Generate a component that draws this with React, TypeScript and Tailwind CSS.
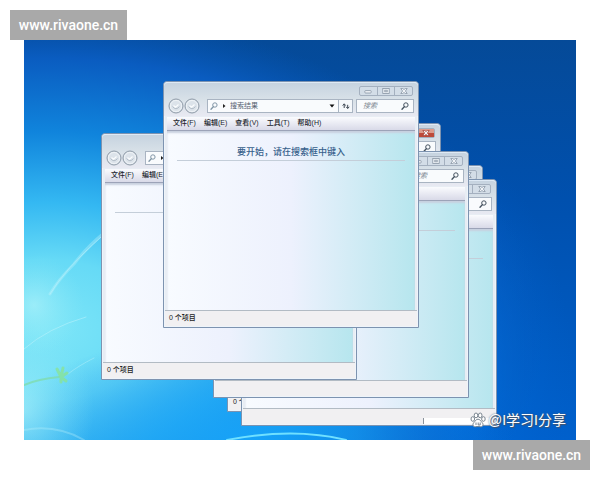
type WindowProps = {
  className: string;
  menus?: string[];
  heading?: string;
  status?: string;
  activeClose?: boolean;
  patched?: boolean;
};

const menuItems = ["文件(F)", "编辑(E)", "查看(V)", "工具(T)", "帮助(H)"];

const Badge = ({ className }: { className: string }) => {
  return (
    <a
      href="#"
      className={`flex h-[30px] w-[117px] items-center justify-center bg-[#a9a9a9] font-['Roboto',sans-serif] text-sm font-medium text-white ${className}`}
    >
      www.rivaone.cn
    </a>
  );
};

const SearchIcon = ({ className }: { className: string }) => {
  return (
    <svg viewBox="0 0 8 8" className={`h-2 w-2 shrink-0 ${className}`} fill="none" stroke="currentColor">
      <circle cx="4.9" cy="3" r="2.2" strokeWidth="1" />
      <path d="M3.3 4.7 L1 7.2" strokeWidth="1.3" strokeLinecap="round" />
    </svg>
  );
};

const NavButton = ({ label }: { label: string }) => {
  return (
    <button aria-label={label} className="h-4 w-4 shrink-0">
      <svg viewBox="0 0 16 16" className="h-4 w-4" fill="none">
        <circle cx="8" cy="8" r="7" fill="#dce3ea" stroke="#8f9ba8" strokeWidth="1" />
        <circle cx="8" cy="8" r="5.6" stroke="#f3f6f9" strokeWidth="0.8" />
        <path d="M4.5 8.5 Q8 13 11.5 8.5" stroke="#b3bdc8" strokeWidth="1" />
        <path d="M5.5 7.5 L7.5 9.2 L10.5 6.5" stroke="#fafcfd" strokeWidth="1.2" />
      </svg>
    </button>
  );
};

const Captions = ({ activeClose }: { activeClose?: boolean }) => {
  return (
    <div className="flex h-2.5 w-[54px] rounded-xs border border-[#a4b0bf] bg-[#d3dde7] text-[#8794a3]">
      <button aria-label="最小化" className="flex flex-1 items-center justify-center border-r border-[#a4b0bf]">
        <svg viewBox="0 0 8 6" className="h-1.5 w-2" fill="#f1f4f8" stroke="currentColor" strokeWidth="0.8">
          <rect x="0.8" y="2.6" width="6.4" height="2.4" rx="0.8" />
        </svg>
      </button>
      <button aria-label="最大化" className="flex flex-1 items-center justify-center border-r border-[#a4b0bf]">
        <svg viewBox="0 0 8 6" className="h-1.5 w-2" fill="#f1f4f8" stroke="currentColor" strokeWidth="0.8">
          <rect x="0.8" y="0.5" width="6.4" height="5" />
          <rect x="2.8" y="2.2" width="2.4" height="1.6" />
        </svg>
      </button>
      <button
        aria-label="关闭"
        className={`flex flex-1 items-center justify-center ${activeClose ? "bg-linear-to-b from-[#dc9c8e] from-45% to-[#bd4a3a] to-50% text-[#a8483c]" : ""}`}
      >
        <svg viewBox="0 0 8 6" className="h-1.5 w-2" fill="#f1f4f8" stroke="currentColor" strokeWidth="0.8">
          <path d="M0.8 0.5 H2.8 L4 1.6 L5.2 0.5 H7.2 L5.4 3 L7.2 5.5 H5.2 L4 4.4 L2.8 5.5 H0.8 L2.6 3 Z" />
        </svg>
      </button>
    </div>
  );
};

const SearchWindow = ({ className, menus = [], heading, status, activeClose, patched }: WindowProps) => {
  return (
    <section
      aria-label="搜索结果"
      className={`absolute flex h-[247px] w-[256px] flex-col rounded-t border border-[#7d93b0] bg-[#e8edf4] shadow-[inset_0_0_0_1px_#eef4fa] ${className}`}
    >
      {/* TITLE BAR */}
      <div className="flex flex-col rounded-t border-t border-[#dfeaf5] bg-linear-to-b from-[#c6d3e0] via-[#d8e1e8] to-[#e8e9f2]">
        <div className="flex justify-end px-[5px] pt-[3px]">
          <Captions activeClose={activeClose} />
        </div>
        {/* ADDRESS */}
        <div className="flex h-5 items-center px-1">
          <NavButton label="后退" />
          <NavButton label="前进" />
          <div className="ml-[7px] flex h-3.5 flex-1 items-center border border-[#a9b4c2] bg-[#f9fbfd] pl-0.5">
            <SearchIcon className="text-[#8196a6]" />
            <svg viewBox="0 0 4 6" className="mx-1 h-1.5 w-1" fill="#222">
              <path d="M1 1 L3.5 3 L1 5 Z" />
            </svg>
            <input
              aria-label="地址"
              defaultValue="搜索结果"
              className="w-0 min-w-0 flex-1 bg-transparent text-[7px] text-[#566270] outline-none"
            />
            <button aria-label="展开" className="flex w-3 justify-center">
              <svg viewBox="0 0 6 4" className="h-1 w-1.5" fill="#111">
                <path d="M0.5 0.5 H5.5 L3 3.5 Z" />
              </svg>
            </button>
          </div>
          <button
            aria-label="刷新"
            className="flex h-3.5 w-3.5 items-center justify-center border border-l-0 border-[#a9b4c2] bg-[#f5f8fb]"
          >
            <svg viewBox="0 0 8 8" className="h-2 w-2" fill="none" stroke="#3c4652" strokeWidth="1">
              <path d="M2.2 6 V2.2 M0.7 3.6 L2.2 1.8 L3.7 3.6" />
              <path d="M5.7 2.8 V6 M4.2 4.8 L5.7 6.6 L7.2 4.8" />
            </svg>
          </button>
          <div className="ml-[3px] flex h-3.5 w-[58px] items-center border border-[#a9b4c2] bg-[#f9fbfd] pr-1 pl-1.5">
            <input
              aria-label="搜索"
              placeholder="搜索"
              className="w-0 min-w-0 flex-1 bg-transparent text-[7px] italic outline-none placeholder:text-[#7d8791]"
            />
            <SearchIcon className="text-[#45525f]" />
          </div>
        </div>
      </div>
      {/* MENU */}
      <nav className="mx-[3px] mt-px flex h-3.5 items-center gap-2 overflow-hidden border-b border-[#9ca3b8] bg-linear-to-b from-[#fafbfe] to-[#d9dae8] pb-0.5 pl-1.5 text-[7px] leading-none font-medium whitespace-nowrap text-[#20242c]">
        {menus.map((menu) => (
          <button key={menu}>{menu}</button>
        ))}
      </nav>
      {/* CONTENT */}
      <main className="mx-[3px] flex-1 bg-linear-to-r from-[#f8fbff] via-[#edf1fd] via-50% to-[#b6e6ee] shadow-[inset_0_2px_2px_#c8d0df]">
        <div className="mx-2.5 h-[30px] border-b border-[#c4ced9] pt-[13px]">
          {heading && (
            <h1 className="text-center text-[9px] leading-4 font-medium text-[#365f8c]">{heading}</h1>
          )}
        </div>
      </main>
      {/* STATUS */}
      <footer className="mx-px mb-px flex h-4 items-center border-t border-[#b2bbc4] bg-[#f1f0f2] pl-1 text-[7px] font-medium text-[#222]">
        {status}
        {patched && <span className="ml-auto h-1.5 w-[72px] self-end border-l border-[#8a929c] bg-white" />}
      </footer>
    </section>
  );
};

const Wallpaper = () => {
  return (
    <svg viewBox="0 0 552 400" preserveAspectRatio="none" className="absolute inset-0 h-full w-full">
      <defs>
        <linearGradient id="sky" x1="0" y1="0" x2="0" y2="1">
          <stop offset="0" stopColor="#054a98" />
          <stop offset="0.4" stopColor="#0050ae" />
          <stop offset="1" stopColor="#0060cc" />
        </linearGradient>
        <radialGradient id="glow" gradientUnits="userSpaceOnUse" cx="0" cy="0" r="1" gradientTransform="translate(20 290) scale(500 320)">
          <stop offset="0" stopColor="#7ee6f8" />
          <stop offset="0.22" stopColor="#66daf6" />
          <stop offset="0.4" stopColor="#34b8f2" />
          <stop offset="0.62" stopColor="#1084dc" />
          <stop offset="0.85" stopColor="#0a5cc0" />
          <stop offset="1" stopColor="#0656b4" stopOpacity="0" />
        </radialGradient>
        <radialGradient id="floor" gradientUnits="userSpaceOnUse" cx="0" cy="0" r="1" gradientTransform="translate(230 400) scale(260 110)">
          <stop offset="0" stopColor="#16a4fa" stopOpacity="0.9" />
          <stop offset="0.4" stopColor="#149cf6" stopOpacity="0.6" />
          <stop offset="1" stopColor="#0a80ea" stopOpacity="0" />
        </radialGradient>
        <radialGradient id="right" gradientUnits="userSpaceOnUse" cx="0" cy="0" r="1" gradientTransform="translate(440 350) scale(110 230)">
          <stop offset="0" stopColor="#0070e0" stopOpacity="0.8" />
          <stop offset="1" stopColor="#0060cc" stopOpacity="0" />
        </radialGradient>
        <radialGradient id="haze">
          <stop offset="0" stopColor="#b4f4fa" stopOpacity="0.6" />
          <stop offset="1" stopColor="#8be8f6" stopOpacity="0" />
        </radialGradient>
      </defs>
      <rect width="552" height="400" fill="url(#sky)" />
      <rect width="552" height="400" fill="url(#glow)" />
      <rect width="552" height="400" fill="url(#right)" />
      <rect width="552" height="400" fill="url(#floor)" />
      <ellipse cx="10" cy="265" rx="50" ry="50" fill="url(#haze)" />
      <ellipse cx="0" cy="370" rx="70" ry="90" fill="url(#haze)" />
      {/* light streaks */}
      <g fill="none" stroke="#c2f4fb" strokeLinecap="round">
        <path d="M26 254 Q34 240 50 224 Q62 208 80 193" strokeWidth="3" opacity="0.35" />
        <path d="M26 254 Q40 230 78 196" strokeWidth="1" opacity="0.5" />
        <path d="M0 309 Q24 288 62 277" strokeWidth="1" opacity="0.5" />
        <path d="M44 334 Q54 326 70 318" strokeWidth="1" opacity="0.4" />
        <path d="M0 390 Q32 384 60 400" strokeWidth="2" opacity="0.3" />
        <path d="M203 400 Q270 387 322 400" stroke="#6fe0ff" strokeWidth="2" />
      </g>
      {/* sprout */}
      <g fill="none" stroke="#7fdcae" strokeLinecap="round">
        <path d="M0 345 Q14 339 35 337" strokeWidth="2" opacity="0.8" />
        <path d="M37 337 L33 329 M37 337 L39 328 M37 337 L43 333 M37 337 L42 341 M37 337 L37 342" strokeWidth="3" stroke="#8ce48a" opacity="0.7" />
      </g>
    </svg>
  );
};

const App = () => {
  return (
    <div className="flex flex-col bg-white pt-2.5 font-['Liberation_Sans','Noto_Sans_CJK_SC',sans-serif]">
      <Badge className="ml-2.5 self-start" />
      {/* DESKTOP */}
      <div className="relative mx-6 aspect-[552/400] overflow-hidden">
        <Wallpaper />
        <SearchWindow className="top-[83px] left-[161px]" activeClose />
        <SearchWindow className="top-[125px] left-[203px]" status="0 个项目" />
        <SearchWindow className="top-[139px] left-[217px]" patched />
        <SearchWindow className="top-[111px] left-[189px]" />
        <SearchWindow className="top-[93px] left-[77px]" menus={menuItems.slice(0, 2)} status="0 个项目" />
        <SearchWindow
          className="top-[41px] left-[139px]"
          menus={menuItems}
          heading="要开始，请在搜索框中键入"
          status="0 个项目"
        />
        {/* WATERMARK */}
        <div className="absolute right-2.5 bottom-2.5 flex items-center gap-0.5 text-sm text-white [text-shadow:0_0_2px_#45566d,1px_1px_1px_#45566d]">
          <svg viewBox="0 0 16 16" className="h-4 w-4" fill="#fff" stroke="#6c7884" strokeWidth="0.9">
            <ellipse cx="2.8" cy="7" rx="1.8" ry="2.3" />
            <ellipse cx="6" cy="3.4" rx="1.8" ry="2.4" />
            <ellipse cx="10.2" cy="3.4" rx="1.8" ry="2.4" />
            <ellipse cx="13.4" cy="7" rx="1.8" ry="2.3" />
            <path d="M8 7.2 C10 7.2 10.6 9 12 10.4 C14 12.4 12.8 15 10.6 14.8 C9 14.5 7 14.5 5.4 14.8 C3.2 15 2 12.4 4 10.4 C5.4 9 6 7.2 8 7.2 Z" />
            <path d="M6 10.5 V13 M8.2 10.5 V13 H10.2 V10.5" fill="none" />
          </svg>
          <span>@I学习I分享</span>
        </div>
      </div>
      <Badge className="mr-2.5 self-end" />
    </div>
  );
};

export default App;
